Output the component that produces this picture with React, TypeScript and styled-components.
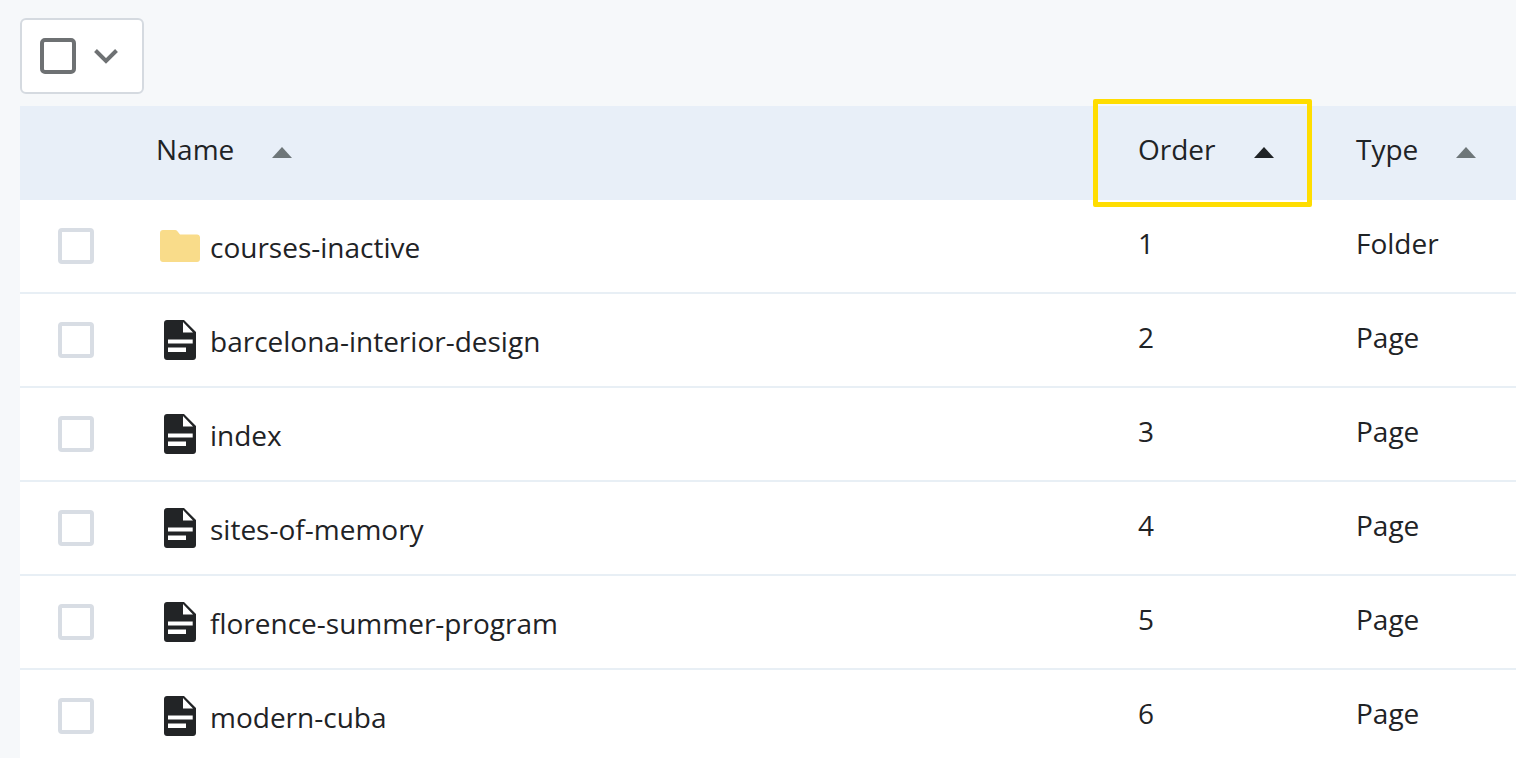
import styled, { createGlobalStyle } from "styled-components";

const rows = [
  { name: "courses-inactive", order: 1, type: "Folder" },
  { name: "barcelona-interior-design", order: 2, type: "Page" },
  { name: "index", order: 3, type: "Page" },
  { name: "sites-of-memory", order: 4, type: "Page" },
  { name: "florence-summer-program", order: 5, type: "Page" },
  { name: "modern-cuba", order: 6, type: "Page" },
];

const FolderIcon = () => (
  <svg width="40" height="32" viewBox="0 0 40 32">
    <path
      d="M3 0h12c1 0 1.800.4 2.400 1.200L20 4.500h17c1.700 0 3 1.300 3 3V29c0 1.700-1.300 3-3 3H3c-1.700 0-3-1.300-3-3V3c0-1.700 1.300-3 3-3z"
      fill="#f9dc8a"
    />
  </svg>
);

const PageIcon = () => (
  <svg width="32" height="40" viewBox="0 0 32 40">
    <path
      d="M3 0h17l12 12v25c0 1.700-1.300 3-3 3H3c-1.700 0-3-1.300-3-3V3c0-1.700 1.300-3 3-3zM19 2v10.500h10zM4 19.500v4h24.700v-4H4zm0 8V32h18v-4.500H4z"
      fill="#222426"
      fillRule="evenodd"
    />
  </svg>
);

const SortIcon = ({ active }: { active?: boolean }) => (
  <SortSvg viewBox="0 0 20 11" $active={active}>
    <path d="M10 0l10 11H0z" />
  </SortSvg>
);

export default function App() {
  return (
    <Page>
      <GlobalStyle />
      <Toolbar>
        <SelectButton>
          <SelectBox />
          <svg width="26" height="16" viewBox="0 0 26 16">
            <path d="M2.500 2.500L13 13 23.500 2.500" fill="none" stroke="#6e7173" strokeWidth="4" />
          </svg>
        </SelectButton>
      </Toolbar>
      <HeaderRow>
        <span />
        <HeaderCell>
          Name
          <SortIcon />
        </HeaderCell>
        <HeaderCell $highlighted>
          Order
          <SortIcon active />
        </HeaderCell>
        <HeaderCell>
          Type
          <SortIcon />
        </HeaderCell>
      </HeaderRow>
      {rows.map((row) => (
        <Row key={row.name}>
          <CheckCell>
            <Checkbox />
          </CheckCell>
          <NameCell>
            <IconSlot>{row.type === "Folder" ? <FolderIcon /> : <PageIcon />}</IconSlot>
            <NameText>{row.name}</NameText>
          </NameCell>
          <Cell>{row.order}</Cell>
          <Cell>{row.type}</Cell>
        </Row>
      ))}
    </Page>
  );
}

const GlobalStyle = createGlobalStyle`
  html, body {
    margin: 0;
    height: 100%;
    overflow: hidden;
    background: #f6f8fa;
  }
`;

const Page = styled.div`
  padding: 18px 0 0 20px;
  font-family: "Open Sans", "Noto Sans", sans-serif;
  font-size: 28px;
  color: #1f2326;
`;

const Toolbar = styled.div`
  display: flex;
  height: 88px;
`;

const SelectButton = styled.div`
  box-sizing: border-box;
  width: 124px;
  height: 76px;
  display: flex;
  align-items: center;
  gap: 17px;
  padding-left: 18px;
  background: #fff;
  border: 2px solid #d5dae0;
  border-radius: 6px;
`;

const SelectBox = styled.div`
  box-sizing: border-box;
  width: 36px;
  height: 36px;
  border: 4px solid #6e7173;
  border-radius: 5px;
`;

const HeaderRow = styled.div`
  display: grid;
  grid-template-columns: 136px 982px 218px 1fr;
  height: 94px;
  background: #e8eff8;
`;

const HeaderCell = styled.div<{ $highlighted?: boolean }>`
  position: relative;
  display: flex;
  align-items: center;
  gap: 38px;
  padding-bottom: 8px;

  ${(p) =>
    p.$highlighted &&
    `
    &::after {
      content: "";
      position: absolute;
      left: -45px;
      top: -7px;
      width: 219px;
      height: 108px;
      box-sizing: border-box;
      border: 5px solid #ffdd00;
      border-radius: 2px;
    }
  `}
`;

const SortSvg = styled.svg<{ $active?: boolean }>`
  width: 20px;
  height: 11px;
  margin-top: 6px;
  fill: ${(p) => (p.$active ? "#1f2326" : "#6e7679")};
`;

const Row = styled.div`
  box-sizing: border-box;
  display: grid;
  grid-template-columns: 137px 981px 218px 1fr;
  height: 94px;
  background: #fff;
  border-bottom: 2px solid #e8eff5;
`;

const Cell = styled.div`
  display: flex;
  align-items: center;
  padding-bottom: 7px;
`;

const CheckCell = styled.div`
  display: flex;
  align-items: center;
  padding-left: 38px;
`;

const Checkbox = styled.div`
  box-sizing: border-box;
  width: 36px;
  height: 36px;
  background: #fff;
  border: 4px solid #d8dde4;
  border-radius: 4px;
`;

const NameCell = styled.div`
  display: flex;
  align-items: center;
`;

const IconSlot = styled.div`
  display: flex;
  justify-content: center;
  width: 46px;
`;

const NameText = styled.span`
  margin-left: 7px;
  padding-top: 2px;
`;
